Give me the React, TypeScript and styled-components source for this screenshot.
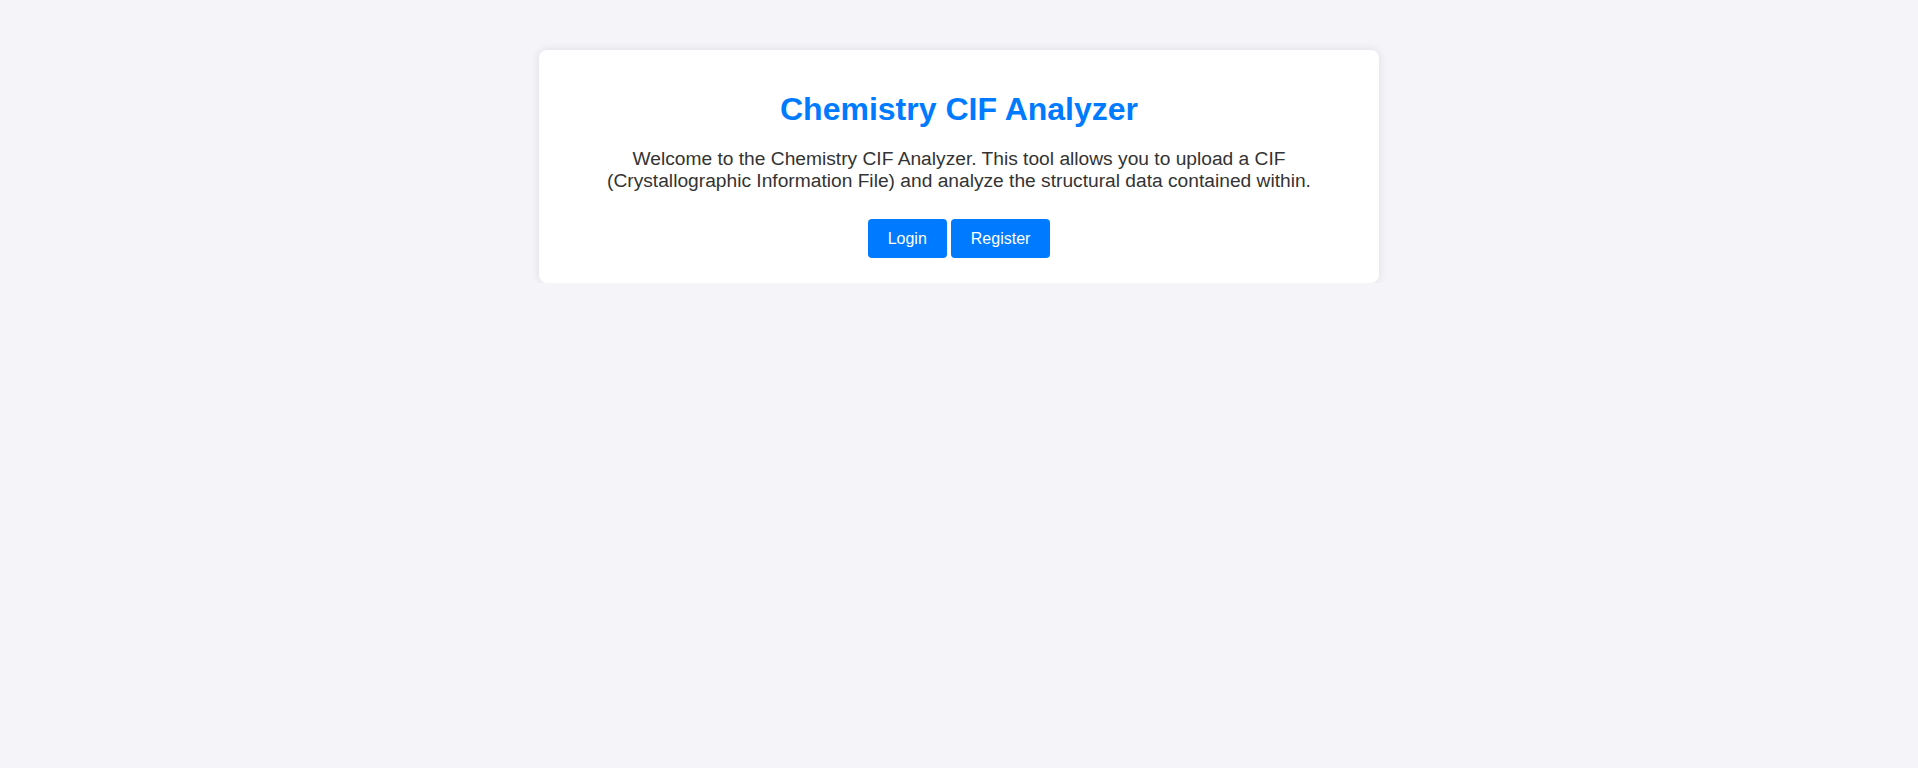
import React from "react";
import styled, { createGlobalStyle } from "styled-components";

const GlobalStyle = createGlobalStyle`
  html, body {
    margin: 0;
    padding: 0;
    background: #f4f4f9;
    font-family: "Liberation Sans", Arial, sans-serif;
    color: #333;
  }
`;

const Page = styled.div`
  padding-top: 50px;
`;

const Card = styled.main`
  max-width: 800px;
  margin: 0 auto;
  padding: 20px;
  background: #fff;
  border-radius: 8px;
  box-shadow: 0 0 10px rgba(0, 0, 0, 0.1);
  text-align: center;
`;

const Title = styled.h1`
  color: #007bff;
  font-size: 32px;
  font-weight: bold;
  margin: 21px 0 20px;
`;

const Intro = styled.p`
  font-size: 19.2px;
  margin: 0 0 26.5px;
  line-height: normal;
`;

const Actions = styled.div`
  display: flex;
  justify-content: center;
  gap: 4px;
  margin-bottom: 5.5px;
`;

const Button = styled.button`
  background: #007bff;
  color: #fff;
  border: none;
  border-radius: 4px;
  padding: 10px 20px;
  font-family: "Liberation Sans", Arial, sans-serif;
  font-size: 16px;
  line-height: 19px;
  cursor: pointer;
`;

export default function App() {
  return (
    <>
      <GlobalStyle />
      <Page>
        <Card>
          <Title>Chemistry CIF Analyzer</Title>
          <Intro>
            Welcome to the Chemistry CIF Analyzer. This tool allows you to upload a CIF
            <br />
            (Crystallographic Information File) and analyze the structural data contained within.
          </Intro>
          <Actions>
            <Button>Login</Button>
            <Button>Register</Button>
          </Actions>
        </Card>
      </Page>
    </>
  );
}
